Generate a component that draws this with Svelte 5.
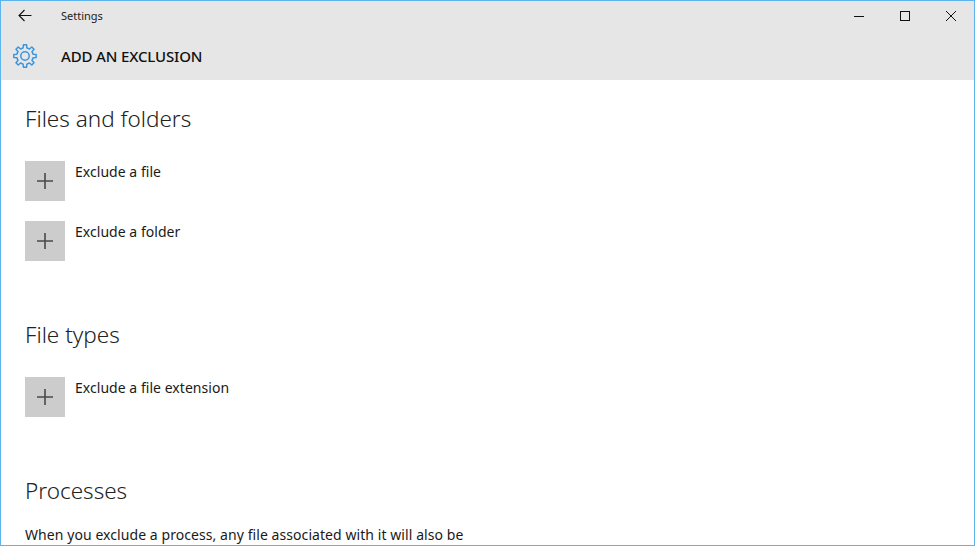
<script>
  const groups = [
    { title: 'Files and folders', items: ['Exclude a file', 'Exclude a folder'] },
    { title: 'File types', items: ['Exclude a file extension'] }
  ];

  function gearPath(teeth, cx, cy, outer, root) {
    const step = 360 / teeth;
    const pts = [];
    for (let i = 0; i < teeth; i++) {
      const a = i * step - 90;
      for (const [off, r] of [[-13, root], [-8, outer], [8, outer], [13, root]]) {
        const t = ((a + off) * Math.PI) / 180;
        pts.push(`${(cx + r * Math.cos(t)).toFixed(2)} ${(cy + r * Math.sin(t)).toFixed(2)}`);
      }
    }
    return 'M' + pts.join('L') + 'Z';
  }
  const gear = gearPath(8, 12, 12, 11.3, 8.3);
</script>

<div class="window">
  <header class="head">
    <div class="titlebar">
      <button class="back" aria-label="Back">
        <svg width="16" height="16" viewBox="0 0 16 16"><path d="M14.500 7.500H2.500M7.500 2 2 7.500 7.500 13" fill="none" stroke="#111" stroke-width="1.100"/></svg>
      </button>
      <span class="app">Settings</span>
      <div class="controls">
        <svg width="12" height="12" viewBox="0 0 12 12"><path d="M1 6.500h10" stroke="#111" fill="none"/></svg>
        <svg width="12" height="12" viewBox="0 0 12 12"><rect x="1.500" y="1.500" width="9" height="9" stroke="#111" fill="none"/></svg>
        <svg width="12" height="12" viewBox="0 0 12 12"><path d="M1 1l10 10M11 1 1 11" stroke="#111" fill="none"/></svg>
      </div>
    </div>
    <div class="pagebar">
      <svg class="gear" width="24" height="24" viewBox="0 0 24 24">
        <path d={gear} fill="none" stroke="#3a96dd" stroke-width="1.500" stroke-linejoin="round"/>
        <circle cx="12" cy="12" r="4.200" fill="none" stroke="#3a96dd" stroke-width="1.500"/>
      </svg>
      <h1>ADD AN EXCLUSION</h1>
    </div>
  </header>
  <main class="content">
    {#each groups as g}
      <section class="group">
        <h2>{g.title}</h2>
        <div class="items">
          {#each g.items as item}
            <div class="item">
              <span class="plus">
                <svg width="18" height="18" viewBox="0 0 18 18"><path d="M9 1v16M1 9h16" stroke="#4a4a4a" stroke-width="1.600" fill="none"/></svg>
              </span>
              <span class="label">{item}</span>
            </div>
          {/each}
        </div>
      </section>
    {/each}
    <section class="group">
      <h2>Processes</h2>
      <p>When you exclude a process, any file associated with it will also be</p>
    </section>
  </main>
</div>

<style>
  :global(body) { margin: 0; }
  .window {
    box-sizing: border-box;
    width: 975px;
    height: 546px;
    border: 1px solid #5cb5ef;
    overflow: hidden;
    background: #fff;
    font-family: "Noto Sans", "Open Sans", sans-serif;
    color: #1a1a1a;
  }
  .head { background: #e6e6e6; height: 79px; }
  .titlebar { display: flex; align-items: center; height: 29px; }
  .back {
    border: 0; padding: 0; background: none;
    width: 16px; height: 16px; margin-left: 16px;
    display: flex;
  }
  .app { font-size: 11px; margin-left: 28px; color: #222; }
  .controls {
    margin-left: auto;
    display: flex;
    gap: 34px;
    padding-right: 17px;
  }
  .pagebar { display: flex; align-items: center; height: 50px; padding-top: 2px; box-sizing: border-box; }
  .gear { margin-left: 12px; }
  h1 { font-size: 15px; font-weight: 500; letter-spacing: -0.15px; margin: 0 0 0 24px; color: #111; }
  .content { padding: 0 24px; }
  .group { margin-bottom: 57px; }
  .group:first-child { padding-top: 22px; }
  h2 { font-size: 22.5px; font-weight: 300; line-height: 32px; padding-top: 1px; margin: 0; color: #222; }
  .items { margin-top: 26px; display: flex; flex-direction: column; gap: 20px; }
  .item { display: flex; gap: 10px; }
  .plus { width: 40px; height: 40px; background: #ccc; display: flex; align-items: center; justify-content: center; }
  .label { font-size: 14px; line-height: 20px; padding-top: 1px; letter-spacing: 0.04px; }
  p { font-size: 14px; line-height: 20px; margin: 18px 0 0; letter-spacing: 0.07px; }
</style>
